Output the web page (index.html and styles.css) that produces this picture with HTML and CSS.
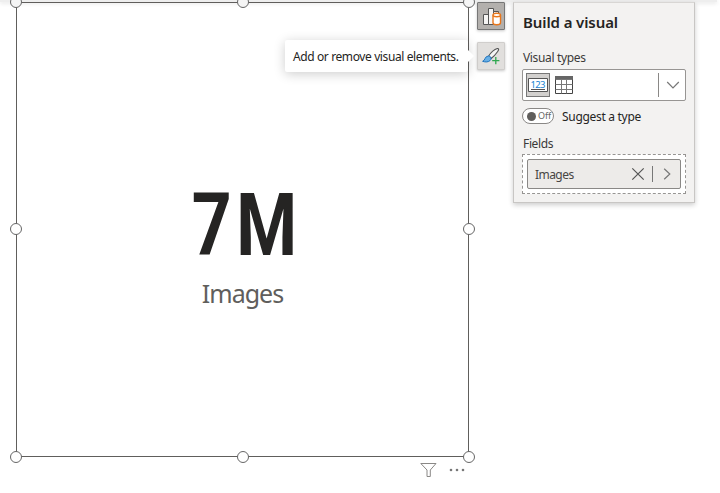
FILE: index.html
```html
<!DOCTYPE html>
<html lang="en">
<head>
<meta charset="utf-8">
<title>Build a visual</title>
<link rel="stylesheet" href="styles.css">
</head>
<body>
<div class="ribbon-edge"></div>
<main class="workspace">
  <section class="visual-column">
    <div class="card">
      <i class="handle left top"></i><i class="handle center top"></i><i class="handle right top"></i>
      <i class="handle left middle"></i><i class="handle right middle"></i>
      <i class="handle left bottom"></i><i class="handle center bottom"></i><i class="handle right bottom"></i>
      <div class="value"><span>7M</span></div>
      <div class="label"><span>Images</span></div>
    </div>
    <div class="visual-actions">
      <svg width="17" height="16" viewBox="0 0 17 16" fill="none" stroke="#8a8886"><path d="M.8 1.5H16L10.3 8V14.5H7V8Z"/></svg>
      <svg width="17" height="16" viewBox="0 0 17 16" fill="#777"><circle cx="2" cy="8" r="1.3"/><circle cx="8" cy="8" r="1.3"/><circle cx="14" cy="8" r="1.3"/></svg>
    </div>
  </section>
  <nav class="tools">
    <button class="tool active" aria-label="Build a visual">
      <svg width="28" height="28" viewBox="0 0 28 28" fill="none"><g fill="#f5f4f3" stroke="#555"><path d="M6.5 12.5H11.5V22.5H6.5Z"/><path d="M11.5 6.5H16.5V22.5H11.5Z"/><path d="M16.5 11.5V9.5H21.5V11"/></g><path d="M16 13.2V20.8C16 23.3 23.5 23.3 23.5 20.8V13.2" fill="#fff" stroke="#e8761b" stroke-width="1.4"/><ellipse cx="19.75" cy="13" rx="3.75" ry="1.8" fill="#fff" stroke="#e8761b" stroke-width="1.4"/></svg>
    </button>
    <button class="tool" aria-label="Add or remove visual elements">
      <svg width="28" height="28" viewBox="0 0 28 28" fill="none"><path d="M11.5 14.2C14 10.5 17.5 7.5 20.3 6.6 22.2 6.2 21.8 8 20.7 9.5 18.8 12.2 16.5 14.8 14.2 16.5Z" fill="#f5f5f5" stroke="#555" stroke-width="1.1"/><path d="M5.6 19.3C8.3 18.7 7.6 14.2 11.3 14 14.2 14 14.7 16.7 13.2 18.4 11.3 20.4 8.2 20.2 5.6 19.3Z" fill="#69afe5" stroke="#2174bd" stroke-width="1"/><path d="M18.8 15V22.2M15.2 18.6H22.4" stroke="#2fa84f" stroke-width="1.3"/></svg>
    </button>
    <div class="tooltip"><span>Add or remove visual elements.</span></div>
  </nav>
  <aside class="panel">
    <h1>Build a visual</h1>
    <div class="caption types">Visual types</div>
    <div class="picker">
      <div class="type selected">
        <svg width="22" height="22" viewBox="0 0 22 22"><path d="M1.5 4.5H20.5V17.5H1.5Z" fill="#fff" stroke="#555"/><path d="M4 15.5H18" stroke="#555"/><text x="3.5" y="13.5" textLength="15" class="digits">123</text></svg>
      </div>
      <svg class="table" width="20" height="20" viewBox="0 0 20 20"><path d="M1.5 1.5H18.5V18.5H1.5Z" fill="#fff" stroke="#444"/><path d="M1 1H19V4H1Z" fill="#666"/><path d="M1.5 4.5H18.5M1.5 9.5H18.5M1.5 14.5H18.5M7.5 4V18.5M12.5 4V18.5" fill="none" stroke="#777"/></svg>
      <span class="divider"></span>
      <svg class="chevron" width="14" height="10" viewBox="0 0 14 10" fill="none" stroke="#777" stroke-width="1.2"><path d="M1.2 2L7 7.8 12.8 2"/></svg>
    </div>
    <div class="suggest"><span class="toggle"><i></i>Off</span><span class="suggest-text">Suggest a type</span></div>
    <div class="caption fields">Fields</div>
    <div class="well">
      <div class="field">
        <span class="name">Images</span>
        <svg width="14" height="14" viewBox="0 0 14 14" fill="none" stroke="#555" stroke-width="1.2"><path d="M1.3 1.3L12.7 12.7M12.7 1.3L1.3 12.7"/></svg>
        <span class="separator"></span>
        <svg width="9" height="14" viewBox="0 0 9 14" fill="none" stroke="#777" stroke-width="1.2"><path d="M1.2 1.8L6.8 7 1.2 12.2"/></svg>
      </div>
    </div>
  </aside>
</main>
</body>
</html>
```
FILE: styles.css
```css
* { box-sizing: border-box; }
body {
  margin: 0;
  width: 720px;
  height: 493px;
  overflow: hidden;
  background: #fff;
  color: #252423;
  font: 12px/16px "Noto Sans", "Open Sans", sans-serif;
}
svg { display: block; flex: none; }
.ribbon-edge {
  height: 2px;
  width: 717px;
  background: #eee;
  box-shadow: 0 1px 4px rgba(0, 0, 0, .16);
}
.workspace { display: flex; align-items: flex-start; padding-left: 16px; }
.visual-column { width: 453px; }
.card {
  position: relative;
  height: 455px;
  padding-top: 174px;
  border: 1px solid #605e5c;
  text-align: center;
}
.handle {
  position: absolute;
  width: 12px;
  height: 12px;
  border: 1px solid #666;
  border-radius: 50%;
  background: #fff;
}
.left { left: -7px; }
.center { left: 220px; }
.right { right: -7px; }
.top { top: -7px; background: #f5f5f5; }
.middle { top: 220px; }
.bottom { bottom: -7px; }
.value {
  height: 96px;
  font: 700 88px/96px Roboto, sans-serif;
}
.value span {
  display: inline-block;
  margin-left: 8px;
  transform: scaleX(.79);
  letter-spacing: 6px;
}
.label { margin-top: 3px; font-size: 25px; line-height: 34px; color: #605e5c; }
.label span { letter-spacing: -1px; }
.visual-actions { display: flex; gap: 12px; padding: 5px 0 0 404px; }
.tools {
  position: relative;
  display: flex;
  flex-direction: column;
  gap: 12px;
  width: 28px;
  margin-left: 8px;
}
.tool {
  width: 28px;
  height: 28px;
  padding: 0;
  border: 1px solid #d0cecc;
  border-radius: 1px;
  background: #e1dfdd;
  box-shadow: 0 1px 3px rgba(0, 0, 0, .22);
}
.tool svg { margin: -1px; }
.tool.active { background: #b3b0ad; border-color: #777; }
.tooltip {
  position: absolute;
  right: 37px;
  top: 38px;
  width: 183px;
  height: 32px;
  padding-left: 8px;
  border-radius: 2px;
  background: #fff;
  box-shadow: 0 2px 12px rgba(0, 0, 0, .2);
  font-size: 12px;
  line-height: 34px;
  white-space: nowrap;
  letter-spacing: -.39px;
}
.tooltip::after {
  content: "";
  position: absolute;
  right: -6px;
  top: 10px;
  border: 6px solid transparent;
  border-right: 0;
  border-left-color: #fff;
}
.panel {
  width: 182px;
  height: 201px;
  margin-left: 8px;
  padding: 8px 8px 0 9px;
  border: 1px solid #c8c6c4;
  border-top-color: #d8d6d4;
  background: #f3f2f1;
  box-shadow: 0 2px 5px rgba(0, 0, 0, .2);
}
h1 { margin: 0; font-size: 15px; font-weight: 600; line-height: 22px; letter-spacing: -.1px; }
.caption { line-height: 16px; letter-spacing: -.35px; color: #3b3a39; }
.types { margin-top: 17px; }
.picker {
  display: flex;
  align-items: center;
  height: 32px;
  margin-top: 3px;
  padding-left: 3px;
  width: 164px;
  margin-left: -1px;
  border: 1px solid #979593;
  border-radius: 2px;
  background: #fff;
}
.type { width: 24px; height: 24px; border: 1px solid #777; background: #d2d0ce; }
.digits { font: 400 9.5px "Noto Sans", sans-serif; fill: #1683d1; }
.table { margin-left: 4px; }
.divider { width: 1px; height: 24px; margin-left: 84px; background: #8a8886; }
.chevron { margin-left: 7px; }
.suggest { display: flex; align-items: center; height: 16px; margin-top: 7px; margin-left: -1px; }
.toggle {
  display: flex;
  align-items: center;
  gap: 2px;
  width: 32px;
  height: 16px;
  padding-left: 4px;
  border: 1px solid #8a8886;
  border-radius: 8px;
  background: #fff;
  font-size: 9px;
  line-height: 14px;
  color: #666;
}
.toggle i { width: 9px; height: 9px; border-radius: 50%; background: #605e5c; }
.suggest-text { margin-left: 8px; padding-top: 1px; letter-spacing: -.3px; }
.fields { margin-top: 12px; }
.well {
  width: 164px;
  height: 40px;
  margin: 2px 0 0 -1px;
  padding: 4px;
  border: 1px dashed #979593;
  background: #fff;
}
.field {
  display: flex;
  align-items: center;
  height: 30px;
  padding: 0 8px 0 7px;
  border: 1px solid #8a8886;
  border-radius: 2px;
  background: #edebe9;
}
.name { flex: 1; padding-top: 2px; letter-spacing: -.55px; color: #484644; }
.separator { width: 1px; height: 16px; margin: 0 10px 0 7px; background: #777; }
```
